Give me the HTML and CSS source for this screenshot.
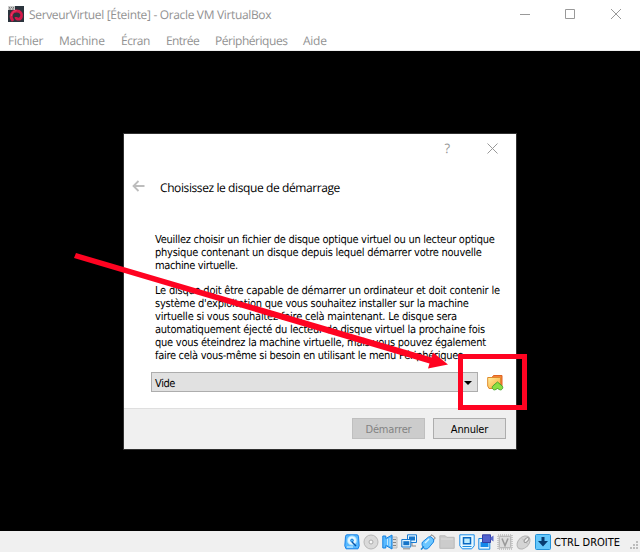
FILE: index.html
```html
<!DOCTYPE html>
<html lang="fr">
<head>
<meta charset="utf-8">
<title>ServeurVirtuel [Éteinte] - Oracle VM VirtualBox</title>
<link rel="stylesheet" href="styles.css">
</head>
<body>
<div class="window">
  <header class="titlebar">
    <svg class="app-icon" width="16" height="16" viewBox="0 0 16 16"><path fill="#2b343d" d="M0 0h16v16H0z"/><path d="M5 15C1 10 4 5 8.500 5c4 0 6 3 5 5.500-1 3.500-5.500 3.500-5.500.5" fill="none" stroke="#d3184a" stroke-width="2.800"/><path d="M3.500 10c0-3 2-5 5-5.500" fill="none" stroke="#f04468" stroke-width="1"/><path fill="#ccc" d="M0 0h7v4H0z"/><path d="M1 1.500h1m1 0h1m1 0h1M1 3h2m1 0h2" stroke="#777"/></svg>
    <span class="app-title">ServeurVirtuel [Éteinte] - Oracle VM VirtualBox</span>
    <svg class="controls" width="102" height="12" viewBox="0 0 102 12" fill="none" stroke="#999"><path d="M0 6.500h10M45.500 1.500h9v9h-9z"/><path d="M91 1l10 10M101 1L91 11"/></svg>
  </header>
  <nav class="menu">
    <span class="m1">Fichier</span><span class="m2">Machine</span><span class="m3">Écran</span><span class="m4">Entrée</span><span class="m5">Périphériques</span><span class="m6">Aide</span>
  </nav>
  <main class="screen">
    <section class="dialog">
      <div class="dialog-top">
        <span class="help">?</span>
        <svg width="11" height="11" viewBox="0 0 11 11" stroke="#999" fill="none"><path d="M.5.5l10 10M10.500.5l-10 10"/></svg>
      </div>
      <div class="heading">
        <svg width="13" height="12" viewBox="0 0 13 12" fill="none" stroke="#bdbdbd" stroke-width="1.800"><path d="M12.500 6H1.500M6.500 1l-5 5 5 5"/></svg>
        <h1>Choisissez le disque de démarrage</h1>
      </div>
      <div class="copy">
        <p><span class="l1">Veuillez choisir un fichier de disque optique virtuel ou un lecteur optique</span><span class="l2">physique contenant un disque depuis lequel démarrer votre nouvelle</span><span class="l3">machine virtuelle.</span></p>
        <p><span class="l4">Le disque doit être capable de démarrer un ordinateur et doit contenir le</span><span class="l5">système d'exploitation que vous souhaitez installer sur la machine</span><span class="l6">virtuelle si vous souhaitez faire celà maintenant. Le disque sera</span><span class="l7">automatiquement éjecté du lecteur de disque virtuel la prochaine fois</span><span class="l8">que vous éteindrez la machine virtuelle, mais vous pouvez également</span><span class="l9">faire celà vous-même si besoin en utilisant le menu Périphériques.</span></p>
      </div>
      <div class="picker">
        <div class="select"><span>Vide</span><svg width="8" height="4" viewBox="0 0 8 4"><path d="M0 0h8L4 4z"/></svg></div>
        <svg width="17" height="17" viewBox="0 0 17 17"><defs><linearGradient id="fold" x2="1" y2="1"><stop stop-color="#fff0a0"/><stop offset="1" stop-color="#f8a32c"/></linearGradient></defs><path d="M5 3.500L6.500 1.500H15v11H5z" fill="#f48238" stroke="#e06420"/><path d="M.7 3.500h12.800V11l-1 3.500H2L.7 12z" fill="url(#fold)" stroke="#e08a2c"/><path d="M10.500 8l4.700 4c1.400 1.600 0 4.300-2.300 3.800l-2.400-1.300-2.400 1.300c-2.300.5-3.700-2.200-2.300-3.800z" fill="#89df42" stroke="#4aa32f"/></svg>
      </div>
      <footer class="actions"><button class="off" disabled>Démarrer</button><button>Annuler</button></footer>
    </section>
  </main>
  <footer class="status">
    <svg width="16" height="16" viewBox="0 0 16 16"><path d="M3 .8h10q1.500 0 1.500 2l.7 9-1.200 3H2L.8 11.800l.7-9q0-2 1.500-2z" fill="#58b9ff" stroke="#1682e8"/><circle cx="8" cy="6.500" r="4.600" fill="#e6f7ff" stroke="#9bdcff"/><circle cx="8" cy="6.500" r="1.400" fill="#58b9ff" stroke="#1682d8"/><path d="M8 8l4 4" stroke="#0755a8" stroke-width="1.500"/><path d="M3 13h6" stroke="#dff5ff"/></svg>
    <svg width="16" height="16" viewBox="0 0 16 16"><circle cx="8" cy="8" r="7" fill="#dadada" stroke="#b7b7b7"/><circle cx="8" cy="8" r="2" fill="#f8f8f8" stroke="#aaa"/></svg>
    <svg width="16" height="16" viewBox="0 0 16 16"><path d="M9 3h6v11H9z" fill="#ddd" stroke="#bbb"/><path d="M11 5.500h3m-3 3h3m-3 3h3" stroke="#888"/><path d="M.8 2h3v2.500L10 1v14l-6.200-3.500V14h-3z" fill="#58b9ff" stroke="#1380e0"/><path d="M5.500 5v6M8 4v8" stroke="#bfe9ff"/></svg>
    <svg width="16" height="16" viewBox="0 0 16 16"><path d="M6.500.8h9v7.700h-9z" fill="#e4f6ff" stroke="#1679d2"/><path d="M8 2.500h6v4H8z" fill="#1674c8"/><path d="M11 9v3h4" stroke="#888" fill="none"/><path d="M.8 5.500h9v7.500h-9z" fill="#e4f6ff" stroke="#1679d2"/><path d="M2.300 7.200h6v4h-6z" fill="#1674c8"/><path d="M2 14.800h7" stroke="#888"/></svg>
    <svg width="16" height="16" viewBox="0 0 16 16"><path d="M9.500 3l2.500-2.300L15.300 4 13 6.500z" fill="#eee" stroke="#777"/><path d="M2.500 8l6-5q2-1 4 1t1 4l-5 6c-1.500 1.500-4 1-4.500.5S1 11 2.500 8z" fill="#6bc6ff" stroke="#1682e2"/><path d="M5 9l4-4" stroke="#d6f2ff" stroke-width="1.500"/><path d="M1 15.500l3-3" stroke="#1682d2" stroke-width="1.500"/></svg>
    <svg width="16" height="16" viewBox="0 0 16 16"><path d="M.8 4.500V1.800h5.500l1.500 1.500h7.400v11H.8z" fill="#ccc" stroke="#b9b9b9"/><path d="M2 5h12" stroke="#ddd"/></svg>
    <svg width="16" height="16" viewBox="0 0 16 16"><path d="M.8.800h14.400v11l-2.500 3H3.300l-2.500-3z" fill="#e6f8ff" stroke="#1c8dea"/><path d="M4.500 3.800h7v6h-7z" fill="#bcecff" stroke="#0869c3" stroke-width="1.500"/><path d="M3.500 12.500h9" stroke="#1c8de0"/></svg>
    <svg width="16" height="16" viewBox="0 0 16 16"><path d="M.8 4.500h11v10.700H.8z" fill="#e4f6ff" stroke="#1688e2"/><path d="M2.500 8h8v5h-8z" fill="#1688e9"/><path d="M4.500.8h8v7.700h-8z" fill="#5262ce" stroke="#343fa4"/><path d="M12.500 3.500l3-2v6l-3-2z" fill="#5968cb"/></svg>
    <svg width="16" height="16" viewBox="0 0 16 16"><path d="M1 1h14v14H1z" fill="#ddd" stroke="#bbb" stroke-width="1.500" stroke-dasharray="1 1"/><path d="M2.500 2.500h11v11h-11z" fill="#ddd" stroke="#bbb"/><path d="M5 4.500l3 7 3-7" fill="none" stroke="#999" stroke-width="1.500"/></svg>
    <svg width="16" height="16" viewBox="0 0 16 16"><ellipse cx="7.500" cy="8.500" rx="5.300" ry="7.500" transform="rotate(45 7.500 8.500)" fill="#d4d4d4" stroke="#b4b4b4"/><path d="M6 4.500l6 6" fill="none" stroke="#bbb"/><ellipse cx="10.500" cy="6" rx="1.500" ry="3" transform="rotate(45 10.500 6)" fill="#eee" stroke="#999"/></svg>
    <svg width="16" height="16" viewBox="0 0 16 16"><rect x=".5" y=".5" width="15" height="15" rx="1" fill="#64c7fb" stroke="#2492d8"/><path d="M6.500 3h3v4H13l-5 5.500L3 7h3.500z" fill="#073b70"/></svg>
    <span class="hostkey">CTRL DROITE</span>
    <svg class="grip" width="8" height="8" viewBox="0 0 8 8" fill="#bcbcbc"><path d="M6 0h2v2H6zM3 3h2v2H3zM6 3h2v2H6zM0 6h2v2H0zM3 6h2v2H3zM6 6h2v2H6z"/></svg>
  </footer>
  <svg class="annotation" width="640" height="552" viewBox="0 0 640 552"><path d="M76 253l355.500 104.500 1.500-5 15 12-20 4 1.500-5L74 258z" fill="#ff0321"/><path d="M460.500 356.500h64v51h-64z" fill="none" stroke="#ff0321" stroke-width="5"/></svg>
</div>
</body>
</html>
```
FILE: styles.css
```css
* { box-sizing: border-box; }
body { margin: 0; }
.window { position: relative; width: 640px; height: 552px; display: flex; flex-direction: column; background: #fff; overflow: hidden; font-family: "DejaVu Sans Condensed", "DejaVu Sans", sans-serif; font-stretch: condensed; font-size: 11px; color: #000; text-rendering: geometricPrecision; }
svg { display: block; flex: none; }
.titlebar { height: 30px; display: flex; align-items: center; padding: 0 18px 2px 8px; color: #929292; font: 12px "Open Sans", sans-serif; }
.app-title { margin-left: 5px; white-space: nowrap; letter-spacing: -.34px; }
.controls { margin-left: auto; }
.menu { height: 21px; display: flex; padding: 2px 8px 0; gap: 16px; color: #929292; font: 12px/18px "Open Sans", sans-serif; border-bottom: 1px solid #eee; white-space: nowrap; }
.m1 { width: 35px; letter-spacing: -.27px; }
.m2 { width: 46px; letter-spacing: -.3px; }
.m3 { width: 29px; letter-spacing: -.5px; }
.m4 { width: 33px; letter-spacing: -.6px; }
.m5 { width: 72px; letter-spacing: -.46px; }
.m6 { width: 25px; letter-spacing: -.25px; }
.screen { height: 480px; background: #000; padding: 82px 0 0 123px; }
.dialog { width: 394px; height: 317px; border: 1px solid #303030; background: #fff; display: flex; flex-direction: column; }
.dialog-top { height: 28px; display: flex; justify-content: flex-end; align-items: center; gap: 37px; padding-right: 18px; }
.help { color: #999; font: 13px "Open Sans", sans-serif; }
.heading { height: 50px; display: flex; align-items: center; padding-left: 8px; gap: 15px; }
.heading svg { margin-top: -3px; }
h1 { margin: 1px 0 0; font: 12px "Open Sans", sans-serif; letter-spacing: -.4px; white-space: nowrap; }
.copy { padding: 21px 0 0 31px; height: 160px; }
p { margin: 0 0 12px; }
p span { display: block; line-height: 13px; white-space: nowrap; width: max-content; }
.l1 { letter-spacing: -.27px; }
.l2 { letter-spacing: -.24px; }
.l3 { letter-spacing: -.36px; }
.l4 { letter-spacing: -.22px; }
.l5 { letter-spacing: -.26px; }
.l6 { letter-spacing: -.22px; }
.l7 { letter-spacing: -.25px; }
.l8 { letter-spacing: -.25px; }
.l9 { letter-spacing: -.29px; }
.picker { display: flex; align-items: center; padding-left: 27px; gap: 9px; height: 20px; }
.select { width: 327px; height: 20px; border: 1px solid #adadad; background: #e1e1e1; padding: 1px 5px 0 3px; display: flex; align-items: center; justify-content: space-between; letter-spacing: -.4px; }
.select span { padding-top: 1px; }
.actions { margin-top: auto; height: 41px; border-top: 1px solid #dfdfdf; background: #f0f0f0; display: flex; justify-content: flex-end; padding: 9px 10px 0; gap: 8px; }
button { width: 73px; height: 21px; border: 1px solid #adadad; background: #e1e1e1; font: inherit; letter-spacing: -.15px; color: #000; padding: 1px 0 0; }
.off { color: #838383; background: #ccc; border-color: #bfbfbf; }
.status { height: 21px; background: #f0f0f0; display: flex; align-items: center; gap: 3px; padding: 1px 2px 0 344px; }
.status svg:nth-child(-n+11) { margin-right: .1px; }
.hostkey { white-space: nowrap; }
.grip { margin: 5px 0 0 auto; }
.annotation { position: absolute; inset: 0; }
```
